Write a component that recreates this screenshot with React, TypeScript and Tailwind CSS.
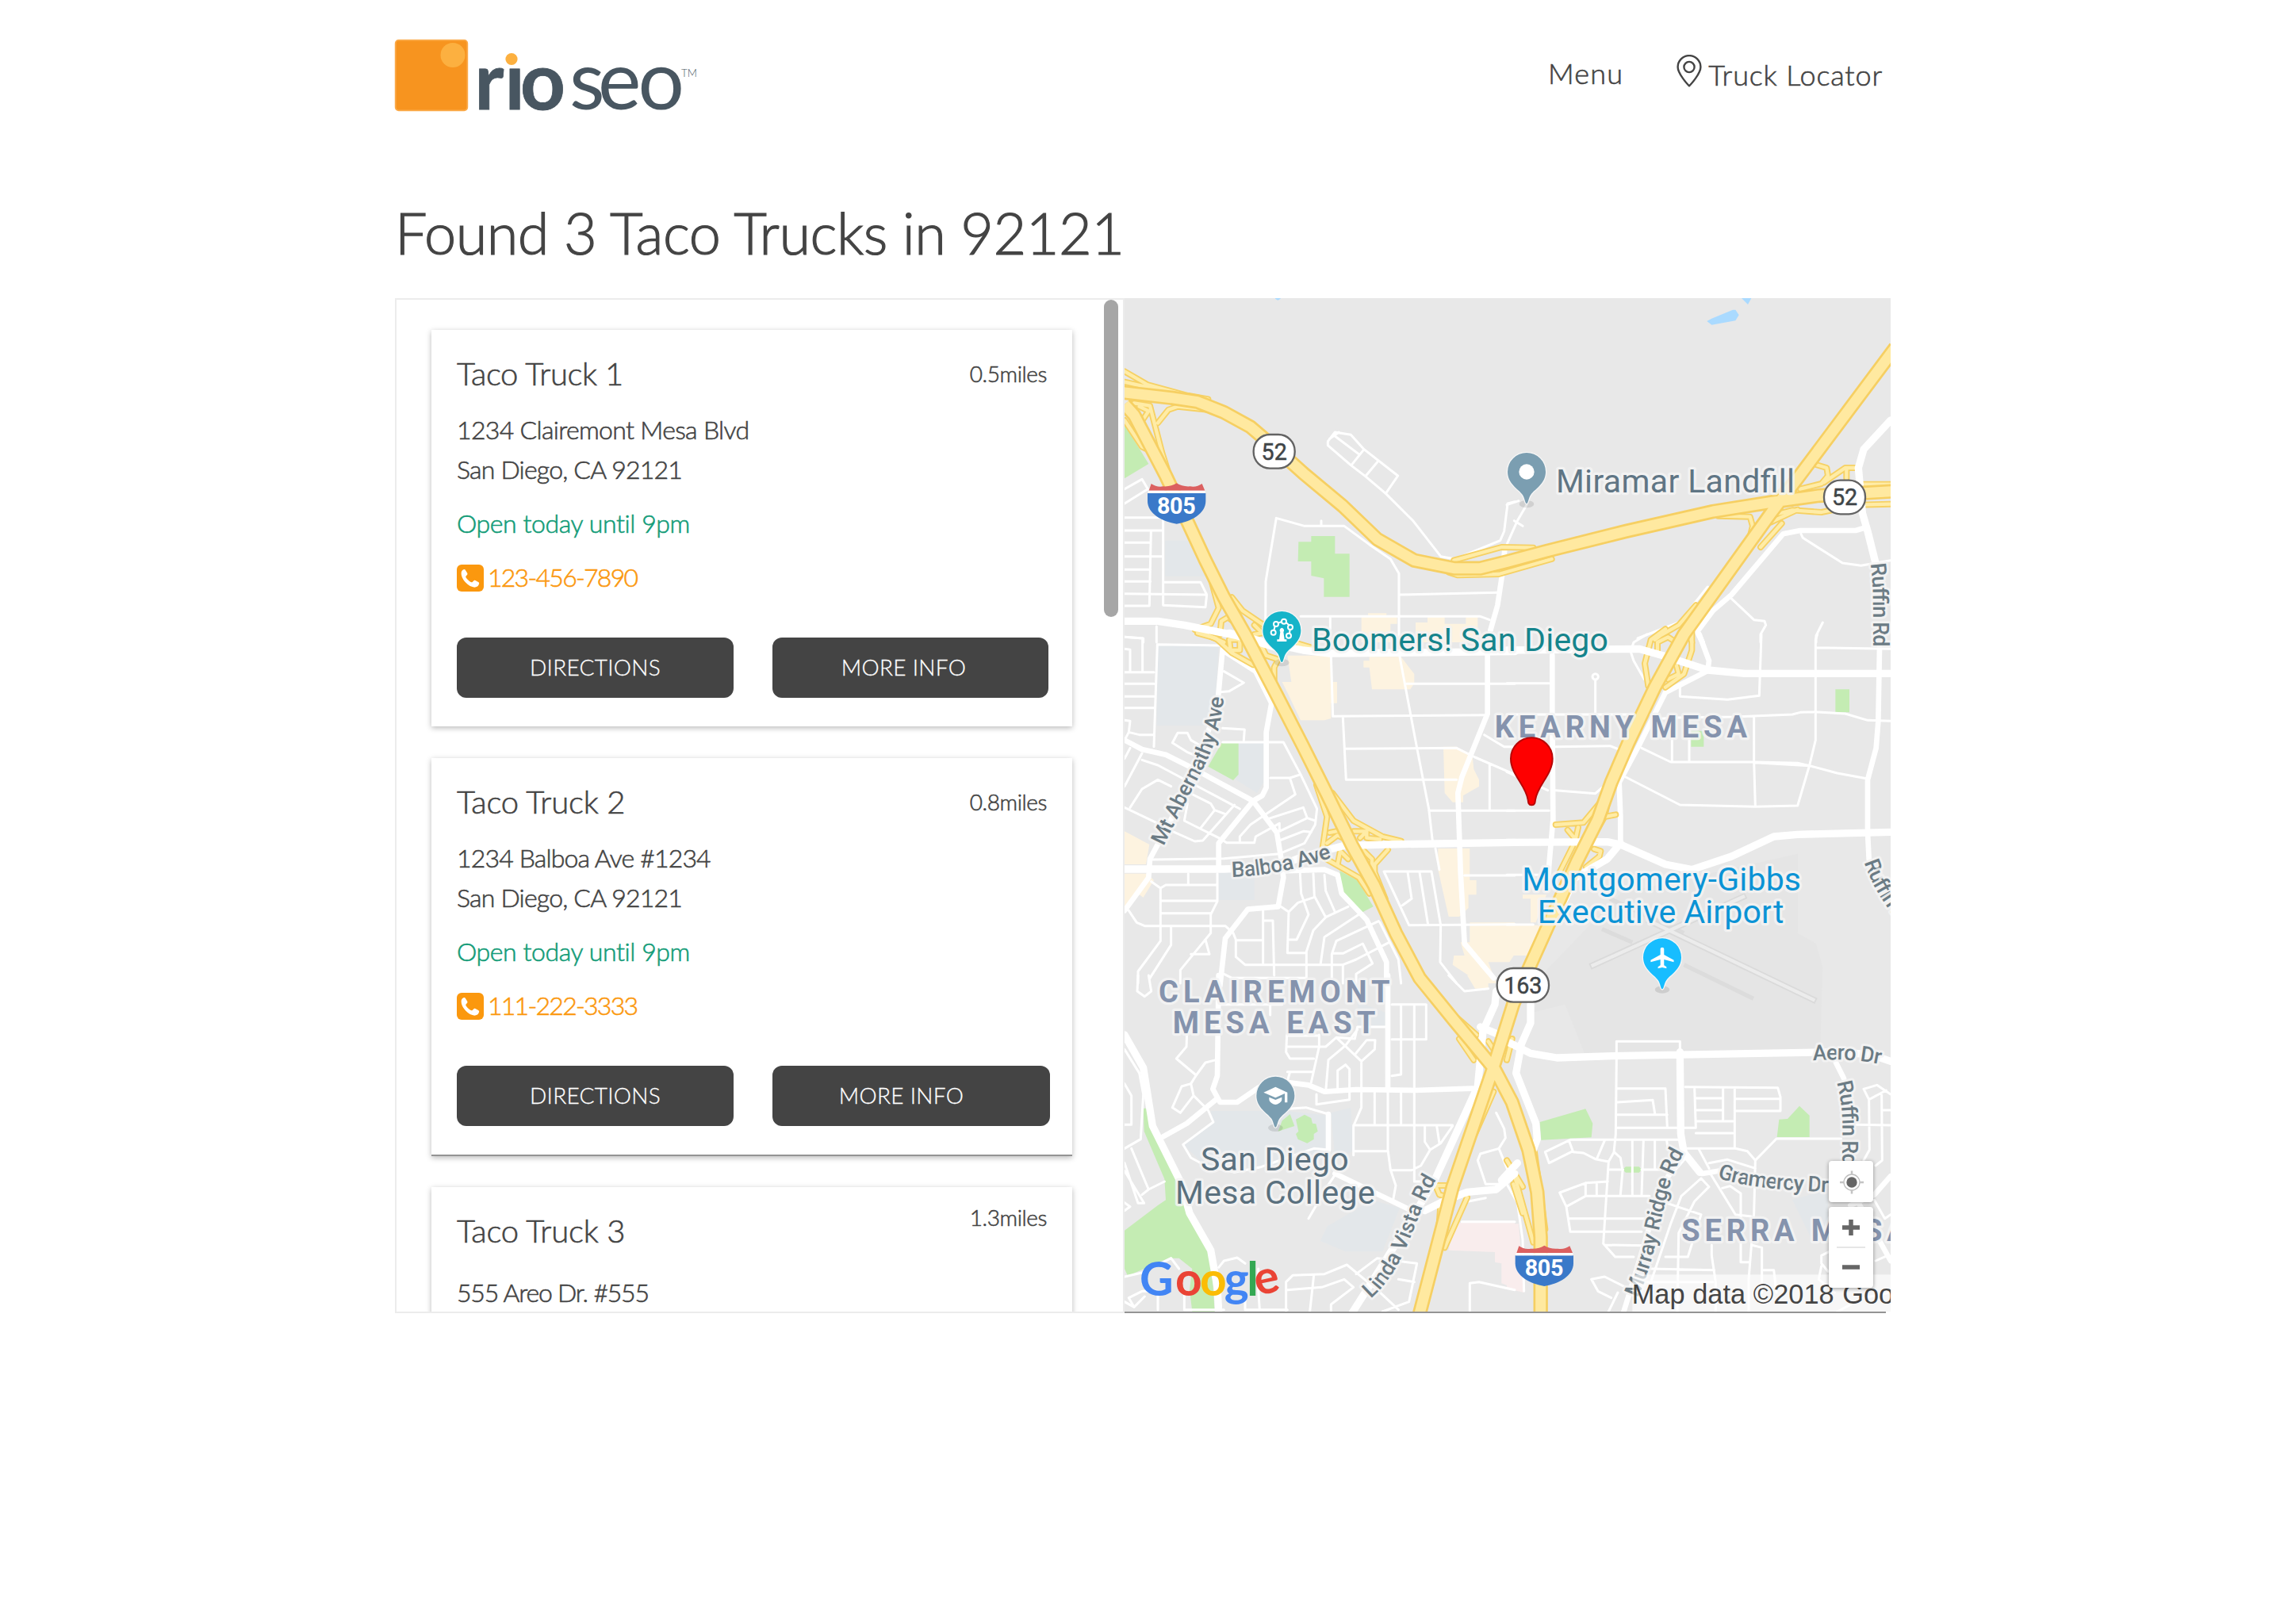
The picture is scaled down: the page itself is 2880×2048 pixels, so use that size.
import type { ReactNode } from 'react';
import clsx from 'clsx';

/* ---------- Header ---------- */

function Logo() {
  return (
    <svg className="block h-[90px] w-[384px] overflow-visible" viewBox="498 50 384 90" aria-label="rio seo">
      <rect x="498.7" y="50.7" width="90.6" height="88.6" rx="4" fill="#f7941f" stroke="#fbab4b" strokeWidth="1.8" />
      <circle cx="571" cy="69.5" r="15.5" fill="#fcb040" />
      <text x="598.5 636.5 656" y="138" fontFamily="Lato" fontWeight="700" fontSize="99" fill="#485661" stroke="#485661" strokeWidth="0.8">rio</text>
      <rect x="630" y="56" width="40" height="27" fill="#fff" />
      <circle cx="645" cy="74.500" r="7.6" fill="#fcb040" />
      <text x="718 754 804.500" y="138" fontFamily="Lato" fontWeight="400" fontSize="103" fill="#485661">seo</text>
      <text x="859" y="96.500" fontFamily="Lato" fontWeight="300" fontSize="13" textLength="20" lengthAdjust="spacingAndGlyphs" fill="#485661">TM</text>
    </svg>
  );
}

function PinOutline() {
  return (
    <svg className="mt-[-3px] h-[41px] w-[32px]" viewBox="0 0 32 41" fill="none" stroke="#444" strokeWidth="2.4">
      <path d="M16 39.300C14 37.500 1.600 24 1.600 15.500a14.400 14.400 0 0 1 28.800 0C30.400 24 18 37.500 16 39.300z" strokeLinejoin="round" />
      <circle cx="16" cy="15.500" r="6.600" />
    </svg>
  );
}

/* ---------- Result cards ---------- */

type Truck = {
  name: string;
  nameSpacing: string;
  miles: string;
  milesOffset: string;
  street: string;
  streetSpacing: string;
  addressOffset: string;
  cardClass: string;
  details?: { phone: string; infoClass: string };
};

const trucks: Truck[] = [
  {
    name: 'Taco Truck 1', nameSpacing: 'tracking-[-0.400px]', miles: '0.5miles', milesOffset: 'mt-1',
    street: '1234 Clairemont Mesa Blvd', streetSpacing: 'tracking-[-0.670px]', addressOffset: 'mt-[22px]',
    cardClass: 'mb-10 h-[500px]',
    details: { phone: '123-456-7890', infoClass: 'w-[348px] pr-[17px]' },
  },
  {
    name: 'Taco Truck 2', nameSpacing: 'tracking-[-0.200px]', miles: '0.8miles', milesOffset: 'mt-1',
    street: '1234 Balboa Ave #1234', streetSpacing: 'tracking-[-0.850px]', addressOffset: 'mt-[22px]',
    cardClass: 'mb-[39px] h-[500px] border-b-2 border-[#949494]',
    details: { phone: '111-222-3333', infoClass: 'w-[350px] pr-[25px]' },
  },
  {
    name: 'Taco Truck 3', nameSpacing: 'tracking-[-0.200px]', miles: '1.3miles', milesOffset: '-mt-[13px]',
    street: '555 Areo Dr. #555', streetSpacing: 'tracking-[-1.200px]', addressOffset: 'mt-[29px]',
    cardClass: 'h-[170px]',
  },
];

function PhoneIcon() {
  return (
    <svg className="mt-px h-[34px] w-[34px] shrink-0" viewBox="0 0 34 34">
      <rect width="34" height="34" rx="6" fill="#fb980e" />
      <path
        d="M5.700 9.800C6 7.500 8.200 6 9.500 6c.8 0 1.300.6 1.700 1.500l2 3.300c.5 1 .3 1.700-.5 2.500l-1.100 1.200c-.5.6-.4 1.300.1 2 1.700 2.400 3.500 4.100 6 5.500.8.400 1.500.4 2-.1l1.500-1.500c.7-.7 1.400-.7 2.200-.3l3.700 1.900c.9.5 1.200 1 1 2-.5 2.600-2.300 4.300-5 4.600-3.800.3-8.400-2.100-12-6C7.400 18.600 5.200 13.800 5.700 9.800z"
        fill="#fff"
      />
    </svg>
  );
}

function Button({ children, className }: { children: ReactNode; className?: string }) {
  return (
    <button
      className={clsx(
        'flex h-[76px] items-center justify-center rounded-[12px] bg-[#444] pb-[2px] text-[28px] leading-[36px] tracking-[0.300px] text-white [-webkit-text-stroke:0.3px_#fff]',
        className,
      )}
    >
      {children}
    </button>
  );
}

function Card({ truck }: { truck: Truck }) {
  return (
    <article className={clsx('box-content shrink-0 bg-white shadow-[0_2px_7px_rgba(0,0,0,0.28)]', truck.cardClass)}>
      <div className="flex flex-col pt-[31px] pr-[28px] pl-8 text-[32px] leading-[50px] [-webkit-text-stroke:0.600px_currentColor]">
        <div className="flex items-start justify-between">
          <h2 className={clsx('text-[40px] leading-[48px]', truck.nameSpacing)}>{truck.name}</h2>
          <span className={clsx('mr-[4px] text-[28px] leading-[40px] tracking-[-0.400px]', truck.milesOffset)}>{truck.miles}</span>
        </div>
        <p className={clsx(truck.addressOffset, truck.streetSpacing)}>{truck.street}</p>
        {truck.details && (
          <>
            <p className="tracking-[-0.800px]">San Diego, CA 92121</p>
            <p className="mt-[18px] tracking-[-0.400px] text-[#139c78]">Open today until 9pm</p>
            <a className="mt-[18px] flex items-center gap-[5px] tracking-[-1.750px] text-[#fb980e]">
              <PhoneIcon />
              <span>{truck.details.phone}</span>
            </a>
            <div className="mt-[51px] flex">
              <Button className="mr-[49px] w-[349px]">DIRECTIONS</Button>
              <Button className={truck.details.infoClass}>MORE INFO</Button>
            </div>
          </>
        )}
      </div>
    </article>
  );
}

/* ---------- Map ---------- */

type Tile = {
  x: number;
  y: number;
  green?: string;
  water?: string;
  school?: string;
  shops?: string;
  hospital?: string;
  minor?: string;
  medium?: string;
  major?: string;
  ramps?: string;
};

const tiles: Tile[] = [
  {
    x: 0, y: 0,
    green: 'M24 495L115 645L24 700ZM682 940H730V918H820V985H875V1148H778V1078L730 1068V1014H680Z',
    water: 'M594 10H614V20L604 26L594 20Z',
    school: 'M178 935H265L330 1070H178Z',
    shops: 'M920 1225H945V1210H1015V1225H1055V1250H1030V1320H920ZM1125 1245H1170V1225H1235V1250H1315V1225H1360V1320H1125Z',
    minor: 'M24 740L90 703L112 740L24 795M24 848H170V1180L330 1187L335 1140L312 1093H175M24 897H165M24 943H122M24 995H170M24 1045H122M24 1090H122M24 1136L335 1140M24 1182H118L124 900M557 1250L558 1090L598 850L705 880H855L950 950L1030 1005L1062 1060V1320M768 860V880M1062 1140L1435 1132M690 1222H1370L1405 1235M802 1222V1270M145 1260V1320M24 1300L95 1305V1320M793 575V560L820 525L880 535L930 590L1058 690L1012 757L935 692L880 650ZM1012 757L1115 860L1220 995L1275 1005L1445 935L1460 900L1473 795L1500 788M820 540L910 608M930 590L882 650M980 638L935 692M800 550L835 525',
    medium: 'M1463 960L1453 1060L1435 1180L1408 1275',
    major: 'M24 1240H150L250 1255L450 1295L600 1340',
    ramps: 'M24 295L110 345L330 405M24 335L200 375L340 400M60 415L120 425L165 600L200 710M150 490L190 440L225 428L340 440M80 428L115 445L95 475M24 480L90 580L130 600M1270 1010L1450 960L1570 962M1250 1055L1285 1066L1440 1062L1640 1005M345 1060L380 1190L350 1250L290 1272L400 1320M430 1150L470 1200L570 1268M385 1290L390 1240L415 1225L440 1245M515 1255L545 1285L515 1290',
  },
  {
    x: 1470, y: 0,
    water: 'M757 105L775 95L855 62H865L878 82L865 103L775 119ZM888 18H925L912 42Z',
    minor: 'M75 800L40 860L0 950L-10 985M28 860L60 880M0 800L45 785M1113 910L1120 925L1270 1020L1340 1030L1452 1010M845 1150L935 1235L975 1240L980 1255L960 1290V1320M1195 1245L1170 1295V1320M650 1245L495 1305M760 1110L680 1210',
    medium: 'M1360 885L1320 897H1110L1045 910L850 1140L780 1200L720 1280L740 1320',
    major: 'M1452 480L1350 590L1330 660L1345 830L1365 900L1395 1020',
    ramps: 'M1170 648L1210 660L1215 690L1190 720L1110 740M1200 715L1280 660L1320 660M1285 660V700M1000 840L1080 820L1190 828L1330 800L1452 797M1000 865L1100 818M800 842L920 845L930 880L920 920M1300 722H1452M960 960L1040 870M560 1310L580 1295L650 1255L715 1180M690 1280L700 1320M500 900L780 815M1090 690L1000 790',
  },
  {
    x: 0, y: 1290,
    green: 'M395 405H455V530L435 552L340 500ZM838 895L905 930L965 1030L920 1053L868 1010L845 960Z',
    school: 'M150 43H380L370 240L320 345H145ZM455 410H550V560L525 600L445 550ZM380 900H515V1005H380Z',
    shops: 'M640 80H805V180H828V260H805V318L780 325H690L640 220L620 180H655ZM950 85H1070L1120 150V185L1105 208H960L950 125H928V100H950ZM1230 425H1280L1340 460L1345 510L1365 550V575L1305 610V635H1265L1235 600ZM1210 810H1330V930H1355V985H1325V1035L1290 1068H1250L1210 890ZM1330 1090H1500V1210L1480 1240H1400L1430 1320H1370L1265 1250L1270 1215H1310L1295 1165H1330ZM24 745L118 795L105 870H24ZM24 905H110L135 930L95 995L80 985L24 1040Z',
    minor: 'M150 38L385 42M148 38L135 425M24 143H135M24 187H135M24 235H135M24 278H135M24 325L45 328L40 370L80 380H135M40 370L24 400M24 10L92 15V140M24 55L45 58V140M400 140L475 183L420 215L385 218M395 355L478 360L475 400M395 408H625L690 530L752 660L745 720L705 790L610 830L400 848L130 852M310 420L275 400L262 373H225L205 410L260 445L320 470M45 430L24 470M90 450L24 575M90 475L150 495L460 660M45 655L90 585L150 550L200 575M24 655L150 715M270 600L350 640L365 665L310 735L250 705L262 640M205 745L290 783L320 780L440 645M365 665L405 680M310 735L385 772L410 788H515L520 765L610 715L610 745L715 695L700 655L560 700M715 695L745 705M460 785V765L500 720L670 605L650 545M575 543H650L690 530M610 780L700 745L730 748M850 315L862 550H1280M805 80L812 310L1400 305M858 433L1280 430L1350 465L1500 530M1065 85L1130 430L1175 660L1190 790M1090 187H1500M1175 667H1500M1405 490V660M1385 380L1460 425H1500M1200 810L1215 890M1310 912H1500M1005 897H1185L1220 1100L1218 1240L1280 1320M1005 897L1100 1100L1500 1097M1095 900L1110 1000L1075 1025M1140 900L1172 1098M125 935L160 960V1160L75 1275V1320M160 960L180 948H370M265 905V948M375 905V1010L350 1060V1130L235 1270V1320M165 1008H375M165 1055H350M40 1045L70 1090L100 1103H405L435 1130L445 1155V1220L480 1250H850M200 1103V1175L120 1300M330 1155L345 1210H275M445 1157H545M548 1045V1250M548 1083H585L590 1290M615 1030L645 1050L640 1205H710M645 1050L680 1015L740 995M688 905L692 980L720 1060L675 1155H645M738 905L742 990L785 1070M780 910L785 970L820 1050M870 1030L785 1070L738 1120L712 1200V1300M910 1060L780 1145L765 1250M985 1085L825 1160L808 1210V1310M1025 1165L900 1230L850 1250V1320M810 1207H850L925 1170L962 1245L900 1285V1320M400 1285L430 1300H710M990 1090L1060 1230L1070 1320',
    medium: 'M24 400L90 435L180 455L270 500L510 630L600 750L615 840L625 920L605 1030L490 1040L405 1150L385 1330M620 895L780 890L830 910L845 980L940 1080L1015 1240V1330M395 55L375 270L300 480L200 700L120 850L115 920L24 1045M510 630L380 790V880M395 60L520 140L580 260L560 370V580L545 610L510 630M1397 80V300L1300 540L1285 600L1295 900L1310 1170L1420 1300',
    major: 'M24 888H400L600 880L700 840L850 800L1010 795L1500 787M420 -5L560 30L700 60L800 72L1500 65',
    ramps: 'M300 -5L370 15L430 70L510 115M420 20H460V60H425ZM590 190V125L605 95L560 80L530 20M680 35L730 50M750 570L790 690L770 830M810 600L890 705L1000 765L1070 782M770 840L910 920L950 980M1020 815L970 870V900L1010 1000M800 750L850 740M790 790L830 760L870 780M890 745H940V770L990 775M915 770L940 745M830 870L840 820L870 850M925 815L960 850V890',
  },
  {
    x: 1470, y: 1290,
    green: 'M1243 208H1296V295H1243ZM697 365H745V425H697Z',
    shops: 'M0 1100H145L85 1215H0ZM60 985H150L110 1090H90V1000H60Z',
    minor: 'M0 185H160M335 300V172M324 160a11 11 0 1 0 22 0a11 11 0 1 0-22 0M0 303H480M560 320L640 315L860 312L1080 303L1110 295L1165 293L1280 300L1365 325L1452 328M470 60L480 30L530 0M470 70L480 100L520 170M655 200V235L835 247L955 232L963 0M1170 50L1452 55M1175 0L1168 20V400L1145 495L1100 648L940 652L655 645L450 540M185 425L390 422L450 445M510 430L620 483H940L1100 487L1145 497M1145 497L1250 525L1360 545M940 485L1145 497M625 390V480M690 390V480M935 310V480L940 650M185 590L335 602L360 580M0 520L155 590M0 667H160M0 910H150M0 1098H100M495 20L530 0',
    medium: 'M172 80V300L175 700L160 870L155 950M728 0L765 100L760 135M755 140L600 220L500 420L425 560L430 690V790M1410 50L1405 330L1397 430L1365 550V750L1370 850M250 950L60 1330',
    major: 'M0 60L500 55L590 80L760 135L900 148H1452M0 787L380 785L430 795L600 870L700 890L850 840L1010 765L1100 757L1452 748M430 790L380 850L260 920',
    ramps: 'M535 195L522 110L545 20L600 -20M700 -10V60L670 150L600 200M570 60V30L610 10L640 30M640 110L650 150L610 170M185 720L290 712L350 640M412 682L370 690L335 750M230 740L260 775L270 730M330 812L355 820L350 840L300 880M250 800L200 900M380 640L370 690',
  },
  {
    x: 0, y: 2580,
    green: 'M95 503H110L130 570L215 740L225 830L265 890L350 1040L365 1272H280L270 1190L280 1110L230 1070H190L36 1137L24 1110V965L150 870L180 850L175 770L98 590ZM605 590L620 550L650 525L667 570ZM672 545L705 527L730 540L735 560L748 562L755 590L740 600V620L715 635L680 620L672 600L682 590Z',
    school: 'M350 513H640L795 530V690L640 720H330L245 640L360 555ZM805 520L880 500L890 665L820 690ZM960 850L1065 880L1000 1045H860L765 1005L790 950ZM905 100L1010 140V190H905Z',
    shops: 'M1320 0H1400V50H1350Z',
    hospital: 'M1270 935H1500V1185L1450 1165V1090L1425 1085V1047L1250 1040Z',
    minor: 'M24 280L80 370L95 450L85 620L24 655M24 410L50 455V565H24M50 655L115 810L90 830M24 710L75 862H98L24 740M115 810L175 780M24 860L45 875L24 890M260 220L258 270L220 315L295 378L275 410L240 420L205 500L235 520L285 455L275 410M295 378L330 330L370 320M285 455L340 510L360 555L245 640L275 690L330 720L440 745L540 725L640 690L740 655L795 660M638 225L635 290L650 315H740M640 270H785L825 235L895 240L905 195M760 225V270L730 405M640 365H735M650 365L640 400M905 195H1010M825 235L920 325L970 280L972 245H940L895 300M905 205L860 265L795 320L785 440M920 330V500L890 570V680M830 430V360L860 338L875 355V470L750 488V450M640 228H760M1035 110H1165V242H1035M1120 110V430M1070 110V375L1035 380M970 440V565M1070 440V560M1020 430V660L1030 735L1050 795L1040 850M890 567H1265M890 665H1020M1120 440V780H1150M1030 737H1110L1145 720L1180 660L1220 635L1265 570M1160 570V630L1180 660M1205 570L1215 635M645 505L710 500L795 525M820 755L790 800L720 920M75 0L72 60L100 80L125 60L115 0M380 1105L400 1080L450 1068L480 1090M635 1272V1160L660 1135L780 1130L865 1095L980 1190L1060 1265M740 1135L725 1272M640 1190L770 1180L855 1150L890 1180L805 1245V1272M900 1130L980 1070L1130 1090L1100 1235L1000 1272M1060 1150L1120 1160M24 1140L90 1125L200 1070L230 1110M24 1235L60 1255L100 1215M60 1255L40 1220L90 1195H150V1265M250 1190V1265H400M530 1110V1190L535 1265M480 1200V1265H640M1300 932H1500M1330 1270V1165L1365 1160L1500 1190M1325 855L1390 842M1430 520L1460 580L1465 615L1440 655L1370 675L1360 700L1390 790H1440M1440 655L1475 740M1250 0L1310 60L1400 50M380 110H620M575 110V150',
    medium: 'M380 0L375 380L358 430L385 480H450L530 425L600 400L720 415L780 440L900 432L1120 435L1340 428M170 610L260 560L370 470M1020 0V430M820 750L1100 885L1160 890M795 525V660',
    major: 'M24 225L95 350L130 570L240 790L270 900L350 1040L375 1180L380 1272M1430 60L1425 110L1380 210L1360 420L1250 660L1190 790L1010 1080L880 1285M1160 890L1240 850L1320 820L1430 810L1500 750M1370 195L1430 220',
    ramps: 'M1270 150L1355 225M1290 240L1345 320M1400 250L1420 280M1400 370L1350 560M1430 370L1500 500M1470 320L1490 240M1200 795H1255V840L1215 830ZM1220 860L1205 1060M1320 840L1235 1030M1495 790L1530 900M1420 440L1350 600',
  },
  {
    x: 1470, y: 2580,
    green: 'M125 555L298 505L325 560L320 613L130 623ZM1030 545L1062 543L1107 494L1145 530V612H1022ZM438 735L450 724H500L511 735L500 746H450Z',
    school: 'M1080 850L1215 810V940L1150 990Z',
    hospital: 'M0 940H45L65 1200L0 1185Z',
    minor: 'M415 320V250H655V290M415 320L412 600L405 670L385 705L365 1015L410 1065H480M418 428H600L607 575M418 480L552 472L560 522M418 527H607M418 577H715L710 425M675 422L1025 425L1035 460V513H862M862 425V650M715 465H815M862 467H1035M818 425V550M715 510H815M715 552H860M715 597H855M240 622H650M240 622L145 668L160 710L250 665L235 625M250 668L290 672L335 695L385 705M370 625L340 695M408 670L430 690L438 740L430 830M390 735H440M510 735H580M475 625V830M517 625L510 830M560 625V735M605 625L610 660M382 780L300 785L200 822L225 875L240 970H510M225 875L298 835H540M298 785V835M340 785V835M235 920H520M370 1020L520 1022M600 860L735 905L685 1065H600M735 768L765 800L710 855L650 975L645 1272M735 768L660 835L620 940L545 1160M545 1110L785 1115M680 655H865L910 665L940 700L1020 618H1265M725 655L765 730M765 710L835 697L940 730M940 700L935 900L915 1150V1272M770 750L865 905L925 912M815 805L845 797L885 825V1085H915M925 1020L965 1030V1200M775 1020V1060L790 1160V1272M965 1115H1010L1020 1200M1350 430L1400 415L1452 450M1350 430L1370 470L1435 435M1370 470L1372 660L1350 700M1418 450L1420 700L1395 720M1420 510H1452M1320 565L1452 567M1390 850L1430 920L1452 905M1395 1080L1440 1060M1230 1040L1190 1060V1090L1215 1120M1190 1100L1180 1150L1240 1200M320 1150L370 1140L450 1180M320 1150L345 1195L395 1220M385 1272L420 1200M0 790L40 860L60 1000L65 1195M520 1160H780M1250 1272L1350 1220L1452 1200',
    medium: 'M440 1280L480 1150L540 950L610 760L670 690M740 750L800 740M1245 330L1275 390M1452 760L1390 830L1300 870M1330 860L1452 1080',
    major: 'M655 290L658 600L670 670L730 745M90 110V180L55 260L35 370L110 560L115 620L90 685M40 710L-20 775M10 255L90 295L190 312L400 305L1250 290L1380 300L1452 325',
    ramps: 'M30 760L100 1010M105 670L145 960M0 450L40 560M0 700L60 800',
  },
];

const highways =
  'M24 420L60 460L180 690L265 870L330 1010L400 1150L480 1290L600 1520L700 1715L785 1885L885 2090L968 2240L1050 2420L1140 2590L1270 2750L1424 2935L1490 3060L1552 3240L1585 3400L1598 3570V3860' +
  'M2940 205L2570 700L2470 830L2140 1290L2030 1490L1930 1700L1865 1850L1815 1990L1735 2150L1555 2550L1494 2690L1412 2950L1265 3380L1140 3860' +
  'M0 368L24 375L200 395L300 410L400 450L500 505L600 590L700 680L850 805L980 930L1120 1010L1270 1040H1370L1470 1015L1620 975L1920 900L2250 825L2470 790L2650 765L2940 748';

function Layer({ kind, fill, stroke, width }: { kind: keyof Tile; fill?: string; stroke?: string; width?: number }) {
  return (
    <g fill={fill ?? 'none'} stroke={stroke} strokeWidth={width} strokeLinejoin="round" strokeLinecap={stroke ? 'round' : undefined}>
      {tiles.map((t) => t[kind] && <path key={`${t.x}-${t.y}`} d={t[kind] as string} transform={`translate(${t.x} ${t.y})`} />)}
    </g>
  );
}

function Place({ x, y, w, color, children, area = false }: { x: number; y: number; w: number; color: string; children: string; area?: boolean }) {
  return (
    <text
      x={x} y={y} textLength={w} fill={color} fontSize={area ? 114 : 123} fontWeight={area ? 700 : 400}
      stroke="#f4f4f4" strokeOpacity="0.85" strokeWidth="20" strokeLinejoin="round" paintOrder="stroke"
    >
      {children}
    </text>
  );
}

const streets = [
  { id: 'abernathy', d: 'M172 2092C230 1970 280 1880 330 1780C370 1700 395 1610 403 1490', w: 612, name: 'Mt Abernathy Ave' },
  { id: 'balboa', d: 'M430 2208C560 2205 690 2175 815 2132', w: 386, name: 'Balboa Ave' },
  { id: 'ruffin1', d: 'M2846 1022C2854 1080 2855 1130 2855 1180V1400', w: 315, name: 'Ruffin Rd' },
  { id: 'ruffin2', d: 'M2822 2152C2847 2225 2880 2290 2960 2390', w: 300, name: 'Ruffin Rd' },
  { id: 'aero', d: 'M2628 2902C2720 2896 2800 2898 2890 2918', w: 256, name: 'Aero Dr' },
  { id: 'ruffin3', d: 'M2718 2984C2738 3060 2740 3120 2740 3180V3320', w: 317, name: 'Ruffin Rd' },
  { id: 'gramercy', d: 'M2266 3345C2380 3385 2520 3392 2720 3402', w: 425, name: 'Gramercy Dr' },
  { id: 'murray', d: 'M1965 3800C2020 3680 2040 3560 2060 3480C2080 3400 2090 3340 2138 3255', w: 578, name: 'Murray Ridge Rd' },
  { id: 'linda', d: 'M955 3803C1030 3740 1080 3640 1110 3560C1140 3490 1160 3420 1204 3352', w: 520, name: 'Linda Vista Rd' },
];

function Interstate({ x, y }: { x: number; y: number }) {
  return (
    <g transform={`translate(${x} ${y})`}>
      <path d="M1 38H221V68C221 115 165 146 111 154C57 146 1 115 1 68Z" fill="#3a79c9" />
      <path d="M6 28L15 2Q35 16 60 12Q90 14 111 0Q132 14 162 12Q187 16 207 2L218 28Z" fill="#db6060" />
      <path d="M3 33H219" stroke="#fff" strokeWidth="9" />
      <text x="37" y="116" textLength="146" fontSize="86" fontWeight="700" fill="#fff">805</text>
    </g>
  );
}

function RouteShield({ x, y, w, label }: { x: number; y: number; w: number; label: string }) {
  return (
    <g>
      <rect x={x - w / 2} y={y - 64} width={w} height="128" rx="62" fill="#fff" stroke="#636363" strokeWidth="7" />
      <text x={x} y={y + 31} fontSize="86" fontWeight="400" textAnchor="middle" fill="#3f4548" stroke="#3f4548" strokeWidth="1.5">{label}</text>
    </g>
  );
}

function MapPin({ x, y, color, children }: { x: number; y: number; color: string; children: ReactNode }) {
  return (
    <g transform={`translate(${x} ${y})`}>
      <ellipse cx="0" cy="122" rx="28" ry="14" fill="#000" opacity="0.1" />
      <path
        d="M0 120C-6 120-6 100-16 86C-30 66-72 46-72 0A72 72 0 0 1 72 0C72 46 30 66 16 86C6 100 6 120 0 120Z"
        fill={color} stroke="#f6f6f6" strokeWidth="8" paintOrder="stroke"
      />
      {children}
    </g>
  );
}

function StreetMap() {
  return (
    <svg className="block h-full w-full" viewBox="24 18 2898 3834" preserveAspectRatio="none" fontFamily="Roboto">
      <rect x="24" y="18" width="2898" height="3834" fill="#e8e8e8" />

      <path d="M1900 2270L2570 2120V2420L2640 2460L2665 2550L2655 2870L1770 2890L1690 2690L1570 2720L1620 2560Z" fill="#e5e5e5" />
      <g fill="none" strokeLinecap="butt">
        <path d="M1830 2405L1945 2455M2140 2540L2403 2668M1860 2290L2140 2420" stroke="#dcdcdc" strokeWidth="16" />
        <path d="M1785 2547L2375 2278M2000 2370L2640 2677" stroke="#dadada" strokeWidth="24" />
        <path d="M1790 2545L2370 2280M2005 2372L2635 2675" stroke="#ececec" strokeWidth="13" />
      </g>

      <Layer kind="school" fill="#e3e7ea" />
      <Layer kind="shops" fill="#fdf3e0" />
      <Layer kind="hospital" fill="#f9eded" />
      <Layer kind="green" fill="#c4ecb3" />
      <Layer kind="water" fill="#aadaff" />

      <Layer kind="minor" stroke="#ffffff" width={9} />
      <Layer kind="medium" stroke="#ffffff" width={20} />
      <Layer kind="ramps" stroke="#f6d164" width={24} />
      <Layer kind="ramps" stroke="#ffeca6" width={13} />
      <Layer kind="major" stroke="#ffffff" width={28} />

      <g fill="none" strokeLinejoin="round">
        <path d={highways} stroke="#f6cf62" strokeWidth="55" />
        <path d={highways} stroke="#ffe9a0" strokeWidth="39" />
      </g>

      <g fontSize="81" fontWeight="500" fill="#6b7b84" stroke="#f4f4f4" strokeOpacity="0.85" strokeWidth="18" strokeLinejoin="round" paintOrder="stroke">
        {streets.map((s) => (
          <g key={s.id}>
            <path id={s.id} d={s.d} fill="none" stroke="none" />
            <text textLength={s.w}>
              <textPath href={`#${s.id}`} textLength={s.w}>{s.name}</textPath>
            </text>
          </g>
        ))}
      </g>

      <Place x={1656} y={752} w={903} color="#5f7584">Miramar Landfill</Place>
      <Place x={732} y={1352} w={1122} color="#15848c">Boomers! San Diego</Place>
      <Place x={1528} y={2258} w={1055} color="#0b93d5">Montgomery-Gibbs</Place>
      <Place x={1586} y={2383} w={932} color="#0b93d5">Executive Airport</Place>
      <Place x={312} y={3318} w={560} color="#5a707e">San Diego</Place>
      <Place x={216} y={3443} w={755} color="#5a707e">Mesa College</Place>
      <Place area x={1424} y={1680} w={955} color="#8593ad">KEARNY MESA</Place>
      <Place area x={153} y={2683} w={875} color="#8593ad">CLAIREMONT</Place>
      <Place area x={206} y={2798} w={767} color="#8593ad">MESA EAST</Place>
      <Place area x={2131} y={3584} w={853} color="#8593ad">SERRA MESA</Place>

      <Interstate x={110} y={718} />
      <Interstate x={1501} y={3602} />
      <RouteShield x={590} y={598} w={156} label="52" />
      <RouteShield x={2748} y={771} w={156} label="52" />
      <RouteShield x={1531} y={2617} w={196} label="163" />

      <MapPin x={1545} y={675} color="#7b9eb1">
        <circle r="29" fill="#fff" />
      </MapPin>
      <MapPin x={619} y={1275} color="#16b4c9">
        <g fill="none" stroke="#fff" strokeWidth="6">
          <circle cx="-32" cy="8" r="9" />
          <circle cx="-22" cy="-24" r="9" />
          <circle cx="8" cy="-34" r="9" />
          <circle cx="32" cy="-12" r="9" />
          <circle cx="26" cy="20" r="9" />
          <path d="M-30 -1L-26 -16M-13 -28L-1 -33M16 -30L27 -20M31 -3L29 11" />
        </g>
        <path d="M0 -10A10 10 0 0 1 6 6L10 34H18V42H-18V34H-10L-6 6A10 10 0 0 1 0 -10Z" fill="#fff" />
      </MapPin>
      <MapPin x={2058} y={2512} color="#17bdff">
        <path
          d="M21 16v-2l-8-5V3.500c0-.83-.67-1.500-1.500-1.500S10 2.670 10 3.500V9l-8 5v2l8-2.500V19l-2 1.500V22l3.500-1 3.500 1v-1.500L13 19v-5.500l8 2.500z"
          fill="#fff" transform="translate(-53 -46) scale(4.600 4)"
        />
      </MapPin>
      <MapPin x={595} y={3035} color="#7b9eb1">
        <path d="M-45 -12L0 -33L45 -12V26H35V-8L0 8Z" fill="#fff" />
        <path d="M-24 6L0 16L24 6V14C24 26 8 34 0 34S-24 26-24 14Z" fill="#fff" />
      </MapPin>

      <path
        d="M1564 1936C1552 1936 1551 1926 1550 1916C1543 1862 1485 1820 1485 1760A79 79 0 0 1 1643 1760C1643 1820 1585 1862 1578 1916C1577 1926 1576 1936 1564 1936Z"
        fill="#fe0000" stroke="#b80505" strokeWidth="6"
      />

      <rect x="1945" y="3712" width="977" height="140" fill="#fff" opacity="0.65" />
      <text x="1943" y="3822" textLength="765" fontFamily="Liberation Sans" fontSize="103" fill="#444">Map data ©2018</text>
      <text x="2740" y="3822" fontFamily="Liberation Sans" fontSize="103" fill="#444">Google</text>

      <text x="81 216 309 401 487 526" y="3792" fontFamily="Lato" fontWeight="700" fontSize="176">
        <tspan fill="#4285f4">G</tspan>
        <tspan fill="#ea4335">o</tspan>
        <tspan fill="#fbbc05">o</tspan>
        <tspan fill="#4285f4">g</tspan>
        <tspan fill="#34a853">l</tspan>
        <tspan fill="#ea4335" rotate="-12">e</tspan>
      </text>
    </svg>
  );
}

function MapControls() {
  return (
    <div className="absolute right-[22px] bottom-[30px] flex w-[56px] flex-col gap-[6px]">
      <button className="flex h-[52px] items-center justify-center rounded-[4px] bg-white shadow-[0_1px_5px_rgba(0,0,0,0.4)]">
        <svg className="mt-[2px] ml-[2px] h-[32px] w-[32px]" viewBox="0 0 32 32" fill="none">
          <circle cx="16" cy="16" r="10" stroke="#bdbdbd" strokeWidth="1.300" />
          <path d="M16 1.500V6M16 26V30.500M1 16H6M26 16H31" stroke="#c4c4c4" strokeWidth="2.500" />
          <circle cx="16" cy="16" r="6.700" fill="#666" />
        </svg>
      </button>
      <div className="flex h-[102px] flex-col items-center rounded-[4px] bg-white shadow-[0_1px_5px_rgba(0,0,0,0.4)]">
        <svg className="h-[50px] w-[22px]" viewBox="0 0 22 50" stroke="#666" strokeWidth="5.500">
          <path d="M0 26H22M11 16V36" />
        </svg>
        <div className="h-[2px] w-9 bg-[#e6e6e6]" />
        <svg className="h-[50px] w-[22px]" viewBox="0 0 22 50" stroke="#666" strokeWidth="5.500">
          <path d="M0 24H22" />
        </svg>
      </div>
    </div>
  );
}

/* ---------- Page ---------- */

export default function App() {
  return (
    <div className="h-[2048px] w-[2880px] overflow-hidden bg-white pl-[498px] font-['Lato',sans-serif] font-light text-[#444]">
      <header className="flex h-[257px] w-[1886px] items-start pt-[50px]">
        <Logo />
        <nav className="mt-[22px] ml-auto flex items-start text-[36px] leading-[40px] [-webkit-text-stroke:0.600px_currentColor]">
          <a className="mr-[67px] tracking-[1.200px]">Menu</a>
          <a className="mr-[10px] flex items-start gap-[8px]">
            <PinOutline />
            <span className="mt-[2px] tracking-[0.850px]">Truck Locator</span>
          </a>
        </nav>
      </header>

      <h1 className="mb-[47px] text-[72px] leading-[72px] tracking-[-0.540px] [-webkit-text-stroke:1.200px_currentColor]">Found 3 Taco Trucks in 92121</h1>

      <main className="flex h-[1280px] w-[1886px]">
        <section className="flex w-[920px] items-start overflow-hidden border-2 border-[#ececec]">
          <div className="ml-[44px] flex h-[1276px] w-[808px] flex-col overflow-visible pt-[38px]">
            {trucks.map((t) => (
              <Card key={t.name} truck={t} />
            ))}
          </div>
          <div className="ml-[40px] h-[400px] w-[18px] rounded-full bg-[#a6a6a6]" />
        </section>
        <section className="flex w-[966px] flex-col">
          <div className="relative h-[1278px] overflow-hidden">
            <StreetMap />
            <MapControls />
          </div>
          <div className="h-[2px] w-[960px] bg-[#949494]" />
        </section>
      </main>
    </div>
  );
}
